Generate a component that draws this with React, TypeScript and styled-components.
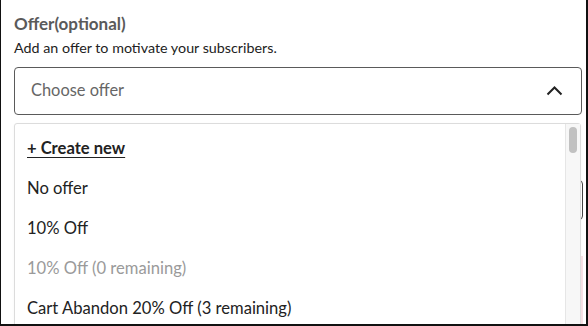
import React from "react";
import styled, { createGlobalStyle } from "styled-components";

const Global = createGlobalStyle`
  html, body { margin: 0; padding: 0; background: #ffffff; }
  body { font-family: "Lato", "Noto Sans", sans-serif; }
  * { box-sizing: border-box; }
`;

const Frame = styled.div`
  width: 588px;
  height: 326px;
  overflow: hidden;
  border-left: 1px solid #111;
  border-right: 2px solid #111;
  border-bottom: 2px solid #111;
  padding: 13px 4px 0 13px;
  display: flex;
  flex-direction: column;
  background: #fff;
`;

const Title = styled.div`
  font-size: 17px;
  line-height: 22px;
  font-weight: 700;
  color: #5a5a5a;
`;

const Description = styled.div`
  margin-top: 3px;
  font-size: 14.3px;
  line-height: 20px;
  color: #222;
`;

const Field = styled.div`
  position: relative;
  margin-top: 9px;
`;

const SelectBox = styled.div`
  height: 48px;
  border: 1px solid #5a5a5a;
  border-radius: 4px;
  padding: 0 18px 3px 16px;
  display: flex;
  align-items: center;
  justify-content: space-between;
  font-size: 16.4px;
  color: #666;
`;

const Chevron = styled.svg`
  margin-top: 3px;
`;

const Menu = styled.div`
  position: absolute;
  top: 56px;
  left: 0;
  right: 1px;
  height: 260px;
  border: 1px solid #dcdcdc;
  border-radius: 3px;
  background: #fff;
  display: flex;
  z-index: 2;
  box-shadow: 0 1px 3px rgba(0, 0, 0, 0.04);
`;

const List = styled.div`
  flex: 1;
  padding: 4px 0 0 12px;
  display: flex;
  flex-direction: column;
`;

const Item = styled.div<{ $muted?: boolean; $action?: boolean }>`
  height: 40px;
  display: flex;
  align-items: center;
  font-size: 16.6px;
  font-weight: ${(p) => (p.$action ? 700 : 400)};
  text-decoration: ${(p) => (p.$action ? "underline" : "none")};
  text-underline-offset: 3px;
  color: ${(p) => (p.$muted ? "#9a9a9a" : "#222")};
`;

const Track = styled.div`
  width: 15px;
  border-left: 1px solid #e6e6e6;
  background: #f7f7f7;
  padding: 3px 3px 0 3px;
`;

const Thumb = styled.div`
  height: 26px;
  border-radius: 4px;
  background: #c1c1c1;
`;

const NextInput = styled.div`
  margin-top: 65px;
  height: 46px;
  border: 1px solid #444;
  border-radius: 4px;
  margin-right: -1px;
`;

const PinkBox = styled.div`
  margin-top: 36px;
  height: 80px;
  background: #f7e1e6;
  margin-right: -1px;
`;

export default function App() {
  return (
    <>
      <Global />
      <Frame>
        <Title>Offer(optional)</Title>
        <Description>Add an offer to motivate your subscribers.</Description>
        <Field>
          <SelectBox>
            <span>Choose offer</span>
            <Chevron width="17" height="10" viewBox="0 0 17 10">
              <polyline
                points="1.5,8.5 8.5,1.5 15.5,8.5"
                fill="none"
                stroke="#222"
                strokeWidth="2"
              />
            </Chevron>
          </SelectBox>
          <Menu>
            <List>
              <Item $action>+ Create new</Item>
              <Item>No offer</Item>
              <Item>10% Off</Item>
              <Item $muted>10% Off (0 remaining)</Item>
              <Item>Cart Abandon 20% Off (3 remaining)</Item>
            </List>
            <Track>
              <Thumb />
            </Track>
          </Menu>
        </Field>
        <NextInput />
        <PinkBox />
      </Frame>
    </>
  );
}
